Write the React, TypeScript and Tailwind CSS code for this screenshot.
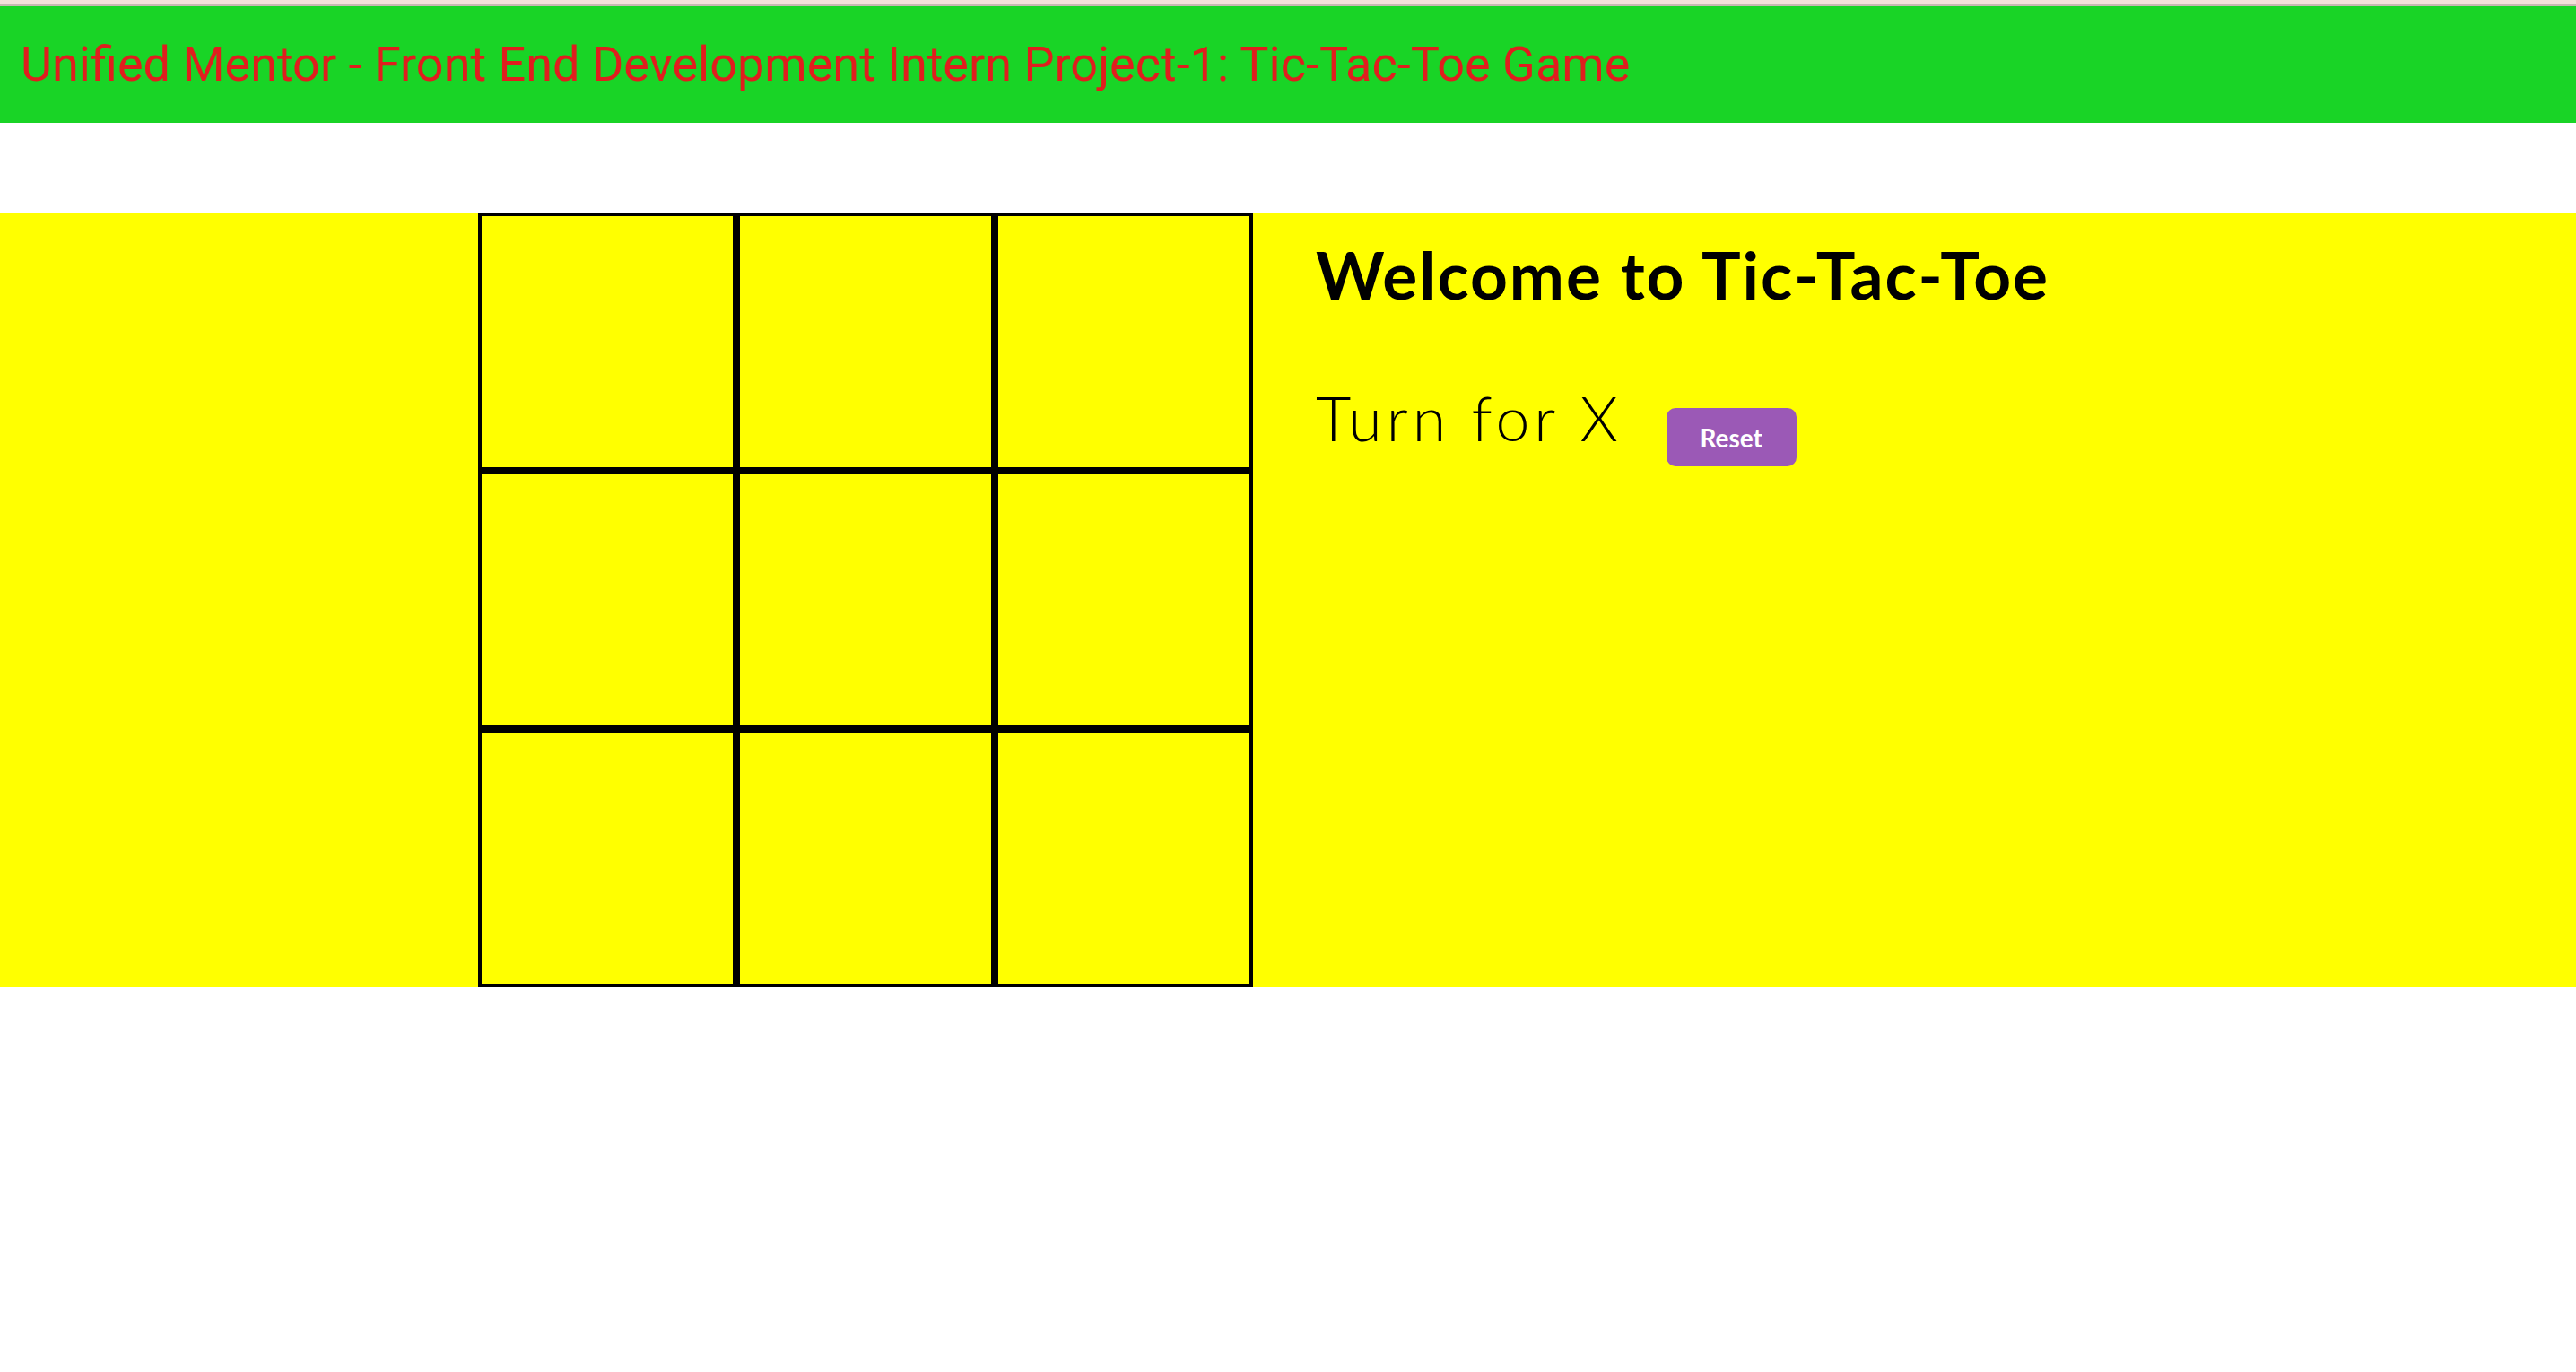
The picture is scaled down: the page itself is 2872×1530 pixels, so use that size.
import React, { useState } from 'react';

export default function App() {
  const [cells, setCells] = useState<(string | null)[]>(Array(9).fill(null));
  const [turn, setTurn] = useState<'X' | 'O'>('X');

  const play = (i: number) => {
    if (cells[i]) return;
    const next = [...cells];
    next[i] = turn;
    setCells(next);
    setTurn(turn === 'X' ? 'O' : 'X');
  };

  const reset = () => {
    setCells(Array(9).fill(null));
    setTurn('X');
  };

  return (
    <div className="min-h-screen bg-white font-['Lato',sans-serif]">
      {/* thin strip above the header */}
      <div className="h-[5px] bg-[#f4e0da]" />
      <div className="h-[2px] bg-[#c9b8b2]" />

      <header className="h-[130px] bg-[#19d426] flex items-center pl-[23px]">
        <h1 className="font-['Roboto',sans-serif] text-[54px] leading-none text-[#e01e1e]">
          Unified Mentor - Front End Development Intern Project-1: Tic-Tac-Toe Game
        </h1>
      </header>

      <main className="mt-[100px] bg-[#ffff00] flex pl-[533px]">
        <div className="grid grid-cols-3">
          {cells.map((c, i) => (
            <button
              key={i}
              onClick={() => play(i)}
              className="w-[288px] h-[288px] border-4 border-black bg-transparent text-[160px] leading-none font-bold text-black"
            >
              {c}
            </button>
          ))}
        </div>

        <div className="pl-[70px] pt-[33px] text-black">
          <h2 className="text-[73px] leading-none font-bold tracking-[2px]">Welcome to Tic-Tac-Toe</h2>
          <div className="mt-[89px] flex items-start">
            <p className="text-[68px] leading-none font-light tracking-[5px]">Turn for {turn}</p>
            <button
              onClick={reset}
              className="ml-[49px] mt-[23px] w-[145px] h-[65px] rounded-[10px] bg-[#9b59b6] text-white text-[28px] font-bold"
            >
              Reset
            </button>
          </div>
        </div>
      </main>
    </div>
  );
}
